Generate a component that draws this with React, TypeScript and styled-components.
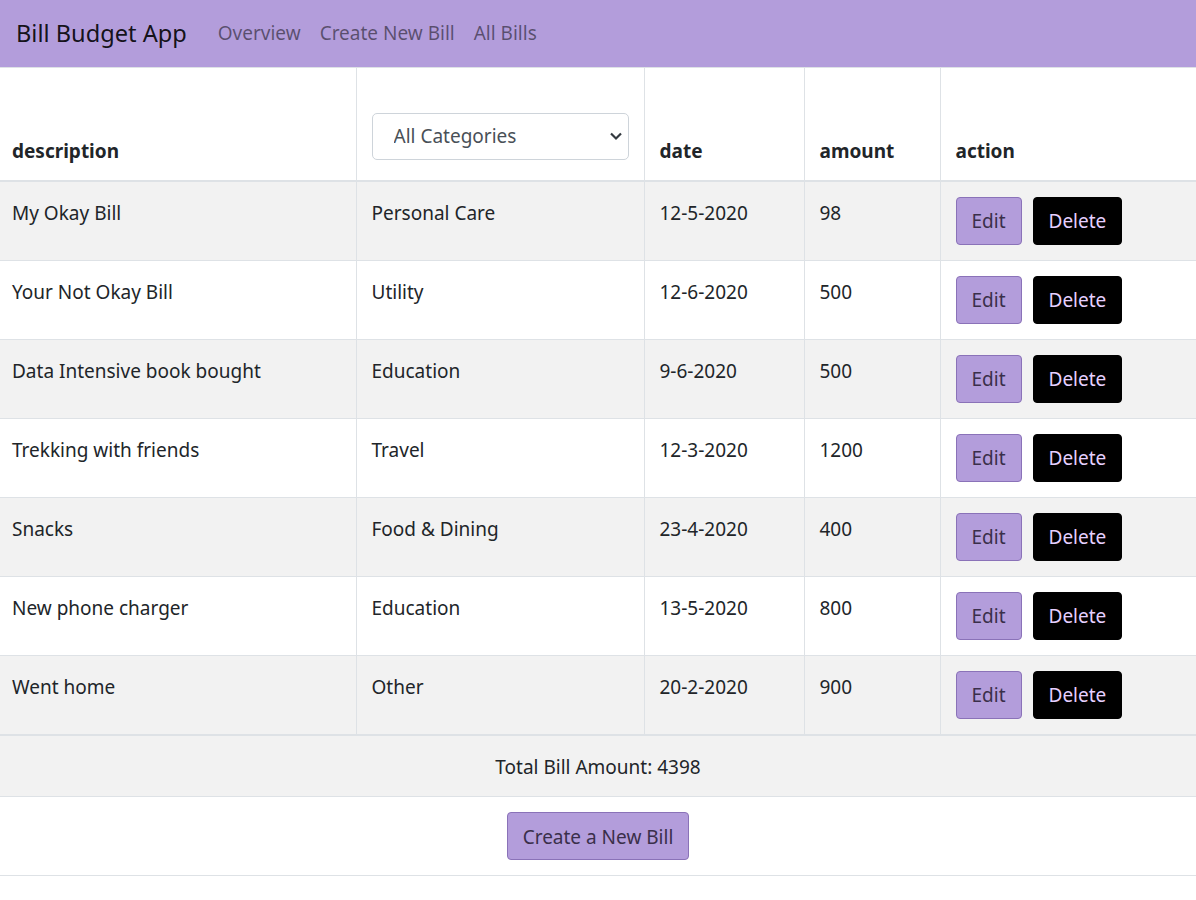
import React from "react";
import styled, { createGlobalStyle } from "styled-components";

const GlobalStyle = createGlobalStyle`
  body {
    margin: 0;
    font-family: "Noto Sans", "Open Sans", sans-serif;
    font-size: 19px;
    color: #212529;
    background: #fff;
  }
`;

const Navbar = styled.nav`
  display: flex;
  align-items: center;
  height: 67px;
  padding: 0 16px;
  background: #b39ddb;
  box-sizing: border-box;
`;

const Brand = styled.a`
  font-size: 23.6px;
  color: rgba(0, 0, 0, 0.9);
  margin-right: 21px;
  text-decoration: none;
  line-height: 36px;
  margin-top: -1px;
`;

const NavLink = styled.a`
  font-size: 19px;
  color: rgba(0, 0, 0, 0.5);
  padding: 0 10px;
  margin-right: -1px;
  text-decoration: none;
  line-height: 30px;
  margin-top: -2px;
`;

const Table = styled.table`
  width: 100%;
  border-collapse: collapse;
  table-layout: fixed;
`;

const HeadCell = styled.th<{ $w: number }>`
  width: ${(p) => p.$w}px;
  height: 113px;
  box-sizing: border-box;
  padding: 15px 15px 14px;
  text-align: left;
  vertical-align: bottom;
  font-weight: 700;
  line-height: 30px;
  border-top: 1px solid #dee2e6;
  border-bottom: 2px solid #dee2e6;
  border-left: 1px solid #dee2e6;
  &:first-child {
    border-left: none;
    padding-left: 12px;
  }
`;

const SelectWrap = styled.div`
  position: relative;
  margin: 0 0 6px 0;
`;

const Select = styled.select`
  appearance: none;
  width: 100%;
  height: 47px;
  box-sizing: border-box;
  padding: 0 40px 0 21px;
  border: 1px solid #ced4da;
  border-radius: 5px;
  background: #fff;
  color: #495057;
  font-family: inherit;
  font-size: 19px;
  font-weight: 400;
`;

const Chevron = styled.svg`
  position: absolute;
  right: 6px;
  top: 18px;
  pointer-events: none;
`;

const Row = styled.tr<{ $striped: boolean }>`
  background: ${(p) => (p.$striped ? "#f2f2f2" : "#fff")};
`;

const Cell = styled.td`
  height: 79px;
  box-sizing: border-box;
  padding: 16px 15px 14px;
  vertical-align: top;
  line-height: 30px;
  border-top: 1px solid #dee2e6;
  border-left: 1px solid #dee2e6;
  &:first-child {
    border-left: none;
    padding-left: 12px;
  }
`;

const ActionCell = styled(Cell)`
  padding: 15px 15px;
`;

const Button = styled.button<{ $dark?: boolean }>`
  height: 48px;
  padding: 1px 15px 0;
  margin-right: 11px;
  border-radius: 4px;
  font-family: inherit;
  font-size: 19px;
  cursor: pointer;
  background: ${(p) => (p.$dark ? "#000" : "#b39ddb")};
  color: ${(p) => (p.$dark ? "#e6d0ff" : "#3a2f4a")};
  border: 1px solid ${(p) => (p.$dark ? "#000" : "#8a72b8")};
`;

const TotalCell = styled.td`
  height: 62px;
  box-sizing: border-box;
  text-align: center;
  background: #f2f2f2;
  border-top: 2px solid #dee2e6;
  line-height: 30px;
  padding-top: 3px;
`;

const FooterCell = styled.td`
  height: 79px;
  box-sizing: border-box;
  text-align: center;
  border-top: 1px solid #dee2e6;
  border-bottom: 1px solid #dee2e6;
  padding: 0;
`;

const CreateButton = styled(Button)`
  margin: 0;
  width: 182px;
  padding: 1px 0 0;
`;

const bills = [
  { d: "My Okay Bill", c: "Personal Care", date: "12-5-2020", a: 98 },
  { d: "Your Not Okay Bill", c: "Utility", date: "12-6-2020", a: 500 },
  { d: "Data Intensive book bought", c: "Education", date: "9-6-2020", a: 500 },
  { d: "Trekking with friends", c: "Travel", date: "12-3-2020", a: 1200 },
  { d: "Snacks", c: "Food & Dining", date: "23-4-2020", a: 400 },
  { d: "New phone charger", c: "Education", date: "13-5-2020", a: 800 },
  { d: "Went home", c: "Other", date: "20-2-2020", a: 900 },
];

export default function App() {
  const total = bills.reduce((s, b) => s + b.a, 0);
  return (
    <>
      <GlobalStyle />
      <Navbar>
        <Brand>Bill Budget App</Brand>
        <NavLink>Overview</NavLink>
        <NavLink>Create New Bill</NavLink>
        <NavLink>All Bills</NavLink>
      </Navbar>
      <Table>
        <thead>
          <tr>
            <HeadCell $w={356}>description</HeadCell>
            <HeadCell $w={288}>
              <SelectWrap>
                <Select defaultValue="all">
                  <option value="all">All Categories</option>
                </Select>
                <Chevron width="14" height="10" viewBox="0 0 14 10">
                  <path d="M2 2.5l5 5 5-5" fill="none" stroke="#343a40" strokeWidth="2.2" />
                </Chevron>
              </SelectWrap>
            </HeadCell>
            <HeadCell $w={160}>date</HeadCell>
            <HeadCell $w={136}>amount</HeadCell>
            <HeadCell $w={256}>action</HeadCell>
          </tr>
        </thead>
        <tbody>
          {bills.map((b, i) => (
            <Row key={i} $striped={i % 2 === 0}>
              <Cell>{b.d}</Cell>
              <Cell>{b.c}</Cell>
              <Cell>{b.date}</Cell>
              <Cell>{b.a}</Cell>
              <ActionCell>
                <Button>Edit</Button>
                <Button $dark>Delete</Button>
              </ActionCell>
            </Row>
          ))}
          <tr>
            <TotalCell colSpan={5}>Total Bill Amount: {total}</TotalCell>
          </tr>
          <tr>
            <FooterCell colSpan={5}>
              <CreateButton>Create a New Bill</CreateButton>
            </FooterCell>
          </tr>
        </tbody>
      </Table>
    </>
  );
}
